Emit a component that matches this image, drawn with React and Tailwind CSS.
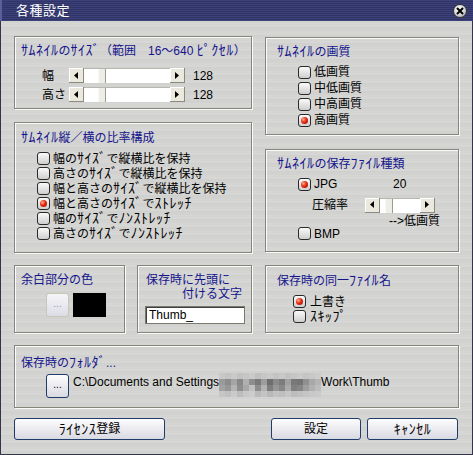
import React from 'react';

const FONT = "font-['Liberation_Sans','Noto_Sans_CJK_JP',sans-serif]";

// half-width kana in Noto are smaller than the bitmap font in the shot, so bump them up
function jp(text) {
  return text.split(/([\uFF61-\uFF9F]+)/).map((part, i) =>
    /[\uFF61-\uFF9F]/.test(part) ? (
      <span key={i} className="text-[14px] tracking-[0.5px]">{part}</span>
    ) : (
      part
    )
  );
}

function Group({ className = '', children }) {
  return (
    <div className={`border border-[#85857c] shadow-[inset_1px_1px_0_#fafafa,1px_1px_0_#fafafa] ${className}`}>
      {children}
    </div>
  );
}

function Title({ children, className = '' }) {
  return <div className={`text-[#14148c] text-[12px] leading-[14px] whitespace-nowrap ${className}`}>{jp(children)}</div>;
}

function Radio({ on }) {
  return (
    <span className="w-[13px] h-[13px] rounded-[3px] border border-[#2a2a2a] bg-gradient-to-b from-[#fafafa] to-[#cfcfcf] flex items-center justify-center shrink-0">
      {on && (
        <span className="w-[7px] h-[7px] rounded-full bg-[radial-gradient(circle_at_35%_35%,#ffb09a_0%,#e8280c_45%,#8c0e00_100%)]" />
      )}
    </span>
  );
}

function Option({ on, label, h = 'h-[15px]', gap = 'gap-[3px]' }) {
  return (
    <div className={`flex items-center ${gap} ${h} text-[12px] leading-[14px] text-black whitespace-nowrap`}>
      <Radio on={on} />
      <span>{jp(label)}</span>
    </div>
  );
}

function Arrow({ dir }) {
  return (
    <div className="w-[15px] h-full bg-[#ebe9de] border-r border-b border-[#8a8a80] shadow-[inset_1px_1px_0_#fff] flex items-center justify-center shrink-0">
      <svg width="4" height="7" viewBox="0 0 4 7">
        {dir === 'left' ? <polygon points="4,0 4,7 0,3.5" fill="#000" /> : <polygon points="0,0 0,7 4,3.5" fill="#000" />}
      </svg>
    </div>
  );
}

function Slider({ width, pos }) {
  return (
    <div className={`flex h-[15px] ${width} shrink-0`}>
      <Arrow dir="left" />
      <div className="relative flex-1 bg-white border-t border-[#b8b8b0]">
        <div
          className="absolute top-0 bottom-0 w-[8px] bg-[#eeede6] border-l border-[#f8f8f8] border-r border-r-[#9a9a92]"
          style={{ left: pos }}
        />
      </div>
      <Arrow dir="right" />
    </div>
  );
}

function Btn({ children, className = '' }) {
  return (
    <div className={`h-[22px] border border-[#1f3c6c] rounded-[3px] bg-gradient-to-b from-[#fdfdfd] to-[#d9d9e2] flex items-center justify-center text-[12px] leading-[14px] text-black ${className}`}>
      {jp(children)}
    </div>
  );
}

const MOSAIC = [
  ['bg-[#c8c8c6]', 'bg-[#c4c4c2]', 'bg-[#cacaca]', 'bg-[#c2c2c2]', 'bg-[#c6c6c4]', 'bg-[#cacac8]', 'bg-[#c0c0c0]', 'bg-[#c6c6c6]', 'bg-[#cacaca]', 'bg-[#c4c4c2]', 'bg-[#c8c8c8]', 'bg-[#c2c2c0]', 'bg-[#c6c6c6]', 'bg-[#cacac8]', 'bg-[#c4c4c4]', 'bg-[#c8c8c6]', 'bg-[#cccccc]'],
  ['bg-[#9a9a9a]', 'bg-[#8c8c8c]', 'bg-[#a4a4a4]', 'bg-[#888888]', 'bg-[#b0b0b0]', 'bg-[#8e8e8e]', 'bg-[#7a7a7a]', 'bg-[#9c9c9c]', 'bg-[#6e6e6e]', 'bg-[#8a8a8a]', 'bg-[#7c7c7c]', 'bg-[#a0a0a0]', 'bg-[#787878]', 'bg-[#747474]', 'bg-[#909090]', 'bg-[#a8a8a8]', 'bg-[#b4b4b4]'],
  ['bg-[#a2a2a2]', 'bg-[#969696]', 'bg-[#b4b4b4]', 'bg-[#8e8e8e]', 'bg-[#a8a8a8]', 'bg-[#c0c0c0]', 'bg-[#8c8c8c]', 'bg-[#b2b2b2]', 'bg-[#7e7e7e]', 'bg-[#969696]', 'bg-[#888888]', 'bg-[#aaaaaa]', 'bg-[#808080]', 'bg-[#868686]', 'bg-[#9e9e9e]', 'bg-[#b0b0b0]', 'bg-[#bcbcbc]'],
  ['bg-[#c6c6c6]', 'bg-[#c0c0c0]', 'bg-[#cacaca]', 'bg-[#bcbcbc]', 'bg-[#c8c8c8]', 'bg-[#cccccc]', 'bg-[#bababa]', 'bg-[#c4c4c4]', 'bg-[#b8b8b8]', 'bg-[#c2c2c2]', 'bg-[#bebebe]', 'bg-[#c6c6c6]', 'bg-[#bcbcbc]', 'bg-[#c0c0c0]', 'bg-[#c4c4c4]', 'bg-[#c8c8c8]', 'bg-[#cacaca]'],
];

function Mosaic() {
  return (
    <div className="flex flex-col -mt-[2px] shrink-0">
      {MOSAIC.map((row, i) => (
        <div key={i} className="flex">
          {row.map((c, j) => (
            <div key={j} className={`w-[6px] h-[6px] ${c}`} />
          ))}
        </div>
      ))}
    </div>
  );
}

export default function App() {
  return (
    <div className={`w-[473px] h-[455px] flex flex-col ${FONT} select-none`}>
      {/* title bar */}
      <div className="h-[21px] shrink-0 flex items-center pl-[14px] pr-[6px] bg-[repeating-linear-gradient(180deg,#3d4179_0px,#3d4179_1px,#2f3366_1px,#2f3366_2px)] border-l-2 border-l-[#5a5f9c]">
        <span className="text-white text-[13px] leading-[15px] tracking-[0.5px]">各種設定</span>
        <div className="ml-auto w-[14px] h-[14px] rounded-full border border-[#3a3a3a] bg-[radial-gradient(circle_at_40%_35%,#ffffff_0%,#d4d4d4_55%,#8a8a8a_100%)] flex items-center justify-center">
          <svg width="8" height="8" viewBox="0 0 8 8">
            <path d="M1 1 L7 7 M7 1 L1 7" stroke="#000" strokeWidth="2" />
          </svg>
        </div>
      </div>

      {/* body */}
      <div className="flex-1 flex flex-col pl-[13px] pr-[13px] pt-[15px] border-l border-r border-b border-[#34344c] bg-[#d3d3d1] bg-[repeating-linear-gradient(180deg,#d6d6d4_0px,#cfcfcd_1px,#d8d8d6_3px,#d2d2d0_4px,#dadad8_5px,#cdcdcb_7px,#d5d5d3_8px)]">
        <div className="grid grid-cols-[238px_194px] gap-x-[13px]">
          {/* left column */}
          <div className="flex flex-col gap-[13px]">
            <Group className="h-[73px] pt-[6px] pl-[6px]">
              <Title>ｻﾑﾈｲﾙのｻｲｽﾞ（範囲　16～640 ﾋﾟｸｾﾙ）</Title>
              <div className="mt-[10px] flex flex-col gap-[4px] pl-[21px] text-[12px] leading-[14px]">
                <div className="flex items-center h-[15px]">
                  <span className="w-[27px]">幅</span>
                  <Slider width="w-[116px]" pos="14px" />
                  <span className="ml-[8px]">128</span>
                </div>
                <div className="flex items-center h-[15px]">
                  <span className="w-[27px]">高さ</span>
                  <Slider width="w-[116px]" pos="14px" />
                  <span className="ml-[8px]">128</span>
                </div>
              </div>
            </Group>

            <Group className="h-[131px] pt-[7px] pl-[6px]">
              <Title>ｻﾑﾈｲﾙ縦／横の比率構成</Title>
              <div className="mt-[6px] pl-[16px] flex flex-col">
                <Option label="幅のｻｲｽﾞで縦横比を保持" />
                <Option label="高さのｻｲｽﾞで縦横比を保持" />
                <Option label="幅と高さのｻｲｽﾞで縦横比を保持" />
                <Option on label="幅と高さのｻｲｽﾞでｽﾄﾚｯﾁ" />
                <Option label="幅のｻｲｽﾞでﾉﾝｽﾄﾚｯﾁ" />
                <Option label="高さのｻｲｽﾞでﾉﾝｽﾄﾚｯﾁ" />
              </div>
            </Group>
          </div>

          {/* right column */}
          <div className="flex flex-col gap-[14px] pt-[1px]">
            <Group className="h-[98px] pt-[6px] pl-[11px]">
              <Title>ｻﾑﾈｲﾙの画質</Title>
              <div className="mt-[5px] pl-[21px] flex flex-col">
                <Option h="h-[16px]" label="低画質" />
                <Option h="h-[16px]" label="中低画質" />
                <Option h="h-[16px]" label="中高画質" />
                <Option h="h-[16px]" on label="高画質" />
              </div>
            </Group>

            <Group className="h-[103px] pt-[6px] pl-[11px]">
              <Title>ｻﾑﾈｲﾙの保存ﾌｧｲﾙ種類</Title>
              <div className="mt-[5px] pl-[21px] flex items-center h-[16px] text-[12px] leading-[14px]">
                <Radio on />
                <span className="ml-[3px] w-[79px]">JPG</span>
                <span>20</span>
              </div>
              <div className="mt-[6px] pl-[35px] flex items-center h-[14px] text-[12px] leading-[14px]">
                <span className="w-[53px]">圧縮率</span>
                <Slider width="w-[70px]" pos="5px" />
              </div>
              <div className="mt-[3px] flex justify-end pr-[18px] h-[12px] items-center text-[12px] leading-[14px]">
                --&gt;低画質
              </div>
              <div className="pl-[21px]">
                <Option h="h-[13px]" label="BMP" />
              </div>
            </Group>
          </div>
        </div>

        {/* second row */}
        <div className="mt-[12px] grid grid-cols-[238px_194px] gap-x-[13px] h-[68px]">
          <div className="flex gap-[12px]">
            <Group className="w-[111px] pt-[7px] pl-[6px]">
              <Title>余白部分の色</Title>
              <div className="mt-[6px] ml-[25px] flex gap-[4px]">
                <div className="w-[23px] h-[24px] rounded-[3px] border border-[#c8c6b4] bg-gradient-to-b from-[#f6f6f8] to-[#dcdce6] flex items-center justify-center text-[10px] text-[#9a9aa8] leading-none pb-[3px]">
                  ...
                </div>
                <div className="w-[33px] h-[24px] bg-black" />
              </div>
            </Group>
            <Group className="flex-1 pt-[7px] pl-[7px]">
              <Title className="ml-[1px] leading-[13px]">保存時に先頭に</Title>
              <Title className="ml-[37px] leading-[13px]">付ける文字</Title>
              <div className="mt-[5px] w-[100px] h-[18px] bg-white border border-[#7a7a72] shadow-[inset_1px_1px_0_#404040] flex items-center pl-[3px] text-[12px] leading-[14px] text-black">
                Thumb_
              </div>
            </Group>
          </div>
          <Group className="pt-[7px] pl-[11px]">
            <Title>保存時の同一ﾌｧｲﾙ名</Title>
            <div className="mt-[6px] pl-[16px] flex flex-col">
              <Option on gap="gap-[4px]" label="上書き" />
              <Option gap="gap-[4px]" label="ｽｷｯﾌﾟ" />
            </div>
          </Group>
        </div>

        {/* folder */}
        <Group className="mt-[12px] h-[63px] pt-[9px] pl-[6px]">
          <Title>保存時のﾌｫﾙﾀﾞ...</Title>
          <div className="mt-[4px] ml-[25px] flex items-start gap-[4px] text-[12px] leading-[14px] text-black">
            <div className="w-[23px] h-[24px] rounded-[3px] border border-[#1f3c6c] bg-gradient-to-b from-[#fdfdfd] to-[#d9d9e2] flex items-center justify-center text-[10px] leading-none pb-[3px] shrink-0">
              ...
            </div>
            <div className="mt-[1px] flex items-start whitespace-nowrap">
              <span>C:\Documents and Settings</span>
              <Mosaic />
              <span>Work\Thumb</span>
            </div>
          </div>
        </Group>

        {/* buttons */}
        <div className="mt-[10px] flex items-center pr-[1px]">
          <Btn className="w-[151px]">ﾗｲｾﾝｽ登録</Btn>
          <div className="ml-auto flex gap-[6px]">
            <Btn className="w-[90px]">設定</Btn>
            <Btn className="w-[91px]">ｷｬﾝｾﾙ</Btn>
          </div>
        </div>
      </div>
    </div>
  );
}
